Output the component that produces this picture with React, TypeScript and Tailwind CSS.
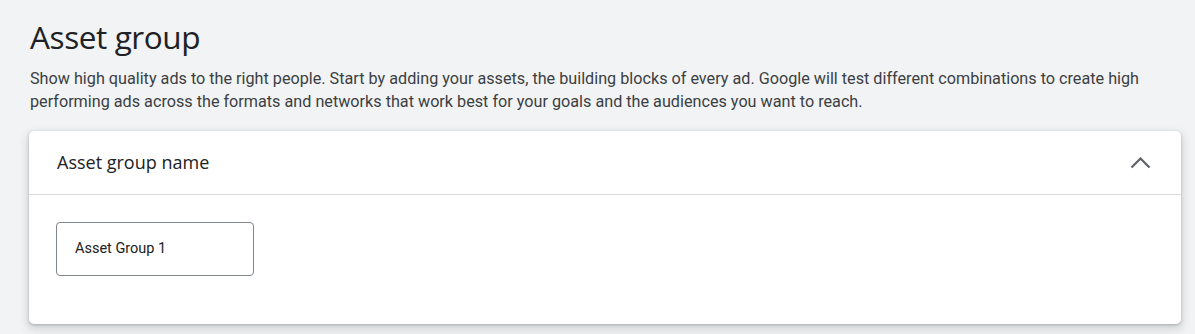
export default function App() {
  return (
    <div className="min-h-[334px] w-full bg-[#f1f3f4] pl-[29px] pr-[14px] pt-[16px] font-['Roboto',sans-serif]">
      <h1 className="ml-px font-['Open_Sans',sans-serif] text-[31.5px] leading-[42px] tracking-[-0.4px] text-[#202124]">
        Asset group
      </h1>
      <p className="ml-px mt-[9px] text-[16.2px] leading-[23px] text-[#3c4043]">
        Show high quality ads to the right people. Start by adding your assets, the building blocks of every ad. Google will test different combinations to create high performing ads across the formats and networks that work best for your goals and the audiences you want to reach.
      </p>
      <section className="mt-[18px] rounded-[5px] bg-white shadow-[0_1px_3px_rgba(60,64,67,0.3),0_4px_8px_2px_rgba(60,64,67,0.15)]">
        <div className="flex h-[64px] items-center justify-between border-b border-[#dadce0] pl-[28px] pr-[30px]">
          <h2 className="font-['Open_Sans',sans-serif] text-[18px] font-medium text-[#202124]">Asset group name</h2>
          <svg width="21" height="12" viewBox="0 0 21 12" className="mt-[1px] text-[#5f6368]">
            <polyline points="1.5,10.5 10.5,1.5 19.5,10.5" fill="none" stroke="currentColor" strokeWidth="2.2" />
          </svg>
        </div>
        <div className="px-[27px] pb-[48px] pt-[27px]">
          <div className="flex h-[54px] w-[198px] items-center rounded-[4px] border border-[#80868b] px-[18px] text-[14.5px] text-[#202124]">
            Asset Group 1
          </div>
        </div>
      </section>
    </div>
  );
}
